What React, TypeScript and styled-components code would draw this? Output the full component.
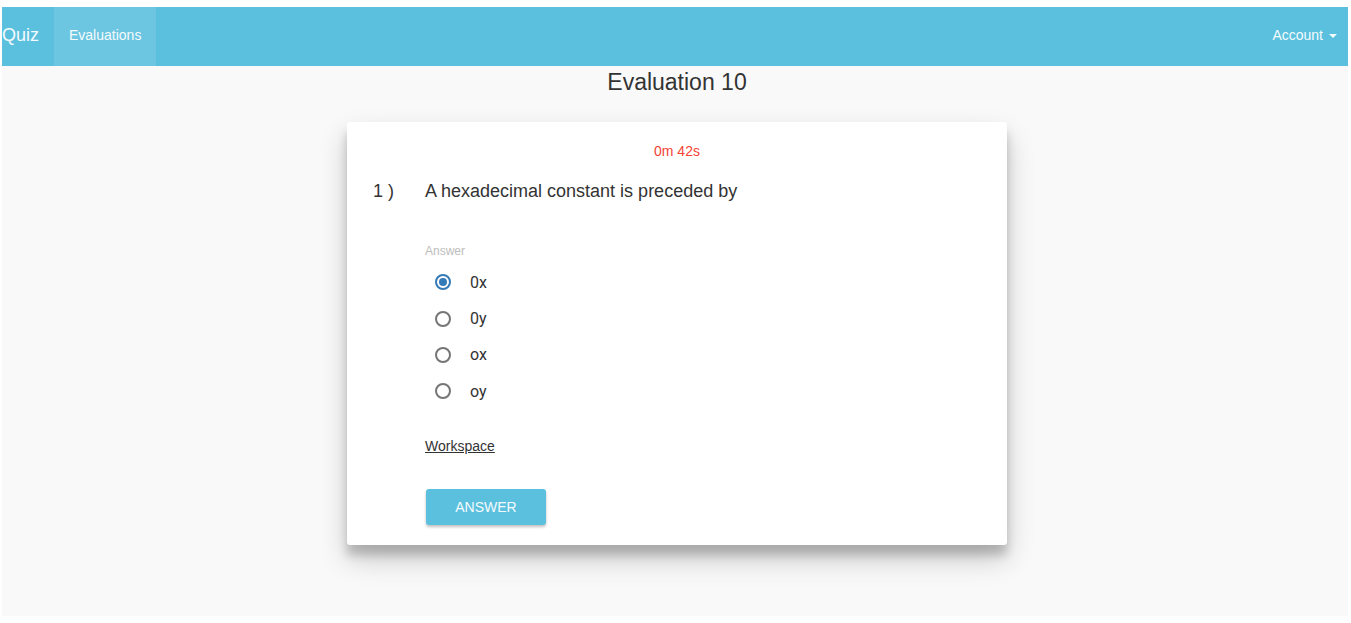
import React from "react";
import styled, { createGlobalStyle } from "styled-components";

const GlobalStyle = createGlobalStyle`
    body {
        margin: 0;
        background: #ffffff;
        font-family: "Liberation Sans", Arial, sans-serif;
        color: #333333;
    }
`;

const Frame = styled.div`
    margin: 7px 0 0 2px;
    width: 1346px;
    height: 609px;
    background: #f9f9f9;
    display: flex;
    flex-direction: column;
`;

const NavBar = styled.nav`
    height: 59px;
    background: #5bc0de;
    display: flex;
    align-items: stretch;
    color: #f4fbfd;
`;

const Brand = styled.div`
    display: flex;
    align-items: center;
    padding-bottom: 2px;
    font-size: 18px;
    width: 52px;
`;

const NavItem = styled.div<{ active?: boolean; right?: boolean }>`
    display: flex;
    align-items: center;
    padding: 0 ${(p) => (p.right ? "11px" : "15px")} 4px 15px;
    font-size: 14px;
    background: ${(p) => (p.active ? "#6cc6e1" : "transparent")};
`;

const Spacer = styled.div`
    flex: 1;
`;

const Caret = styled.span`
    display: inline-block;
    margin-left: 6px;
    margin-top: 2px;
    border-top: 4px solid #f4fbfd;
    border-left: 4px solid transparent;
    border-right: 4px solid transparent;
`;

const Main = styled.main`
    padding-left: 4px;
`;

const Title = styled.h1`
    margin: 3px 0 0;
    text-align: center;
    font-size: 23px;
    font-weight: normal;
    line-height: 26px;
    color: #333333;
`;

const Card = styled.div`
    width: 660px;
    margin: 27px auto 0;
    box-sizing: border-box;
    padding: 19px 26px 20px;
    background: #ffffff;
    border-radius: 3px;
    box-shadow: 0 14px 28px rgba(0, 0, 0, 0.2), 0 10px 10px rgba(0, 0, 0, 0.18);
`;

const Timer = styled.div`
    text-align: center;
    color: #f44336;
    font-size: 14px;
    line-height: 20px;
`;

const QuestionRow = styled.div`
    display: flex;
    margin-top: 18px;
    font-size: 18px;
    line-height: 24px;
`;

const Number = styled.div`
    width: 52px;
    color: #333333;
`;

const Body = styled.div`
    padding-left: 52px;
`;

const Label = styled.div`
    margin-top: 40px;
    font-size: 12px;
    line-height: 16px;
    color: #bdbdbd;
`;

const Options = styled.div`
    margin-top: 5px;
    padding-left: 10px;
`;

const Option = styled.label`
    display: flex;
    align-items: center;
    height: 36.4px;
    font-family: Roboto, "Liberation Sans", sans-serif;
    font-size: 16px;
    color: #333333;
`;

const Radio = styled.span<{ checked?: boolean }>`
    box-sizing: border-box;
    width: 16px;
    height: 16px;
    border-radius: 50%;
    border: 2px solid ${(p) => (p.checked ? "#337ab7" : "#757575")};
    margin-right: 19px;
    display: flex;
    align-items: center;
    justify-content: center;
    &::after {
        content: "";
        width: 8px;
        height: 8px;
        border-radius: 50%;
        background: ${(p) => (p.checked ? "#337ab7" : "transparent")};
    }
`;

const WorkspaceLink = styled.a`
    display: inline-block;
    margin-top: 26px;
    font-size: 14px;
    line-height: 20px;
    color: #333333;
    text-decoration: underline;
`;

const AnswerButton = styled.button`
    display: block;
    margin-top: 33px;
    margin-left: 1px;
    width: 120px;
    height: 36px;
    border: none;
    border-radius: 3px;
    background: #5bc0de;
    color: #f4fbfd;
    font-family: "Liberation Sans", Arial, sans-serif;
    font-size: 14px;
    box-shadow: 0 2px 3px rgba(0, 0, 0, 0.25);
    cursor: pointer;
`;

const options = ["0x", "0y", "ox", "oy"];

const App = () => {
    return (
        <>
            <GlobalStyle />
            <Frame>
                <NavBar>
                    <Brand>Quiz</Brand>
                    <NavItem active>Evaluations</NavItem>
                    <Spacer />
                    <NavItem right>
                        Account<Caret />
                    </NavItem>
                </NavBar>
                <Main>
                    <Title>Evaluation 10</Title>
                    <Card>
                        <Timer>0m 42s</Timer>
                        <QuestionRow>
                            <Number>1 )</Number>
                            <div>A hexadecimal constant is preceded by</div>
                        </QuestionRow>
                        <Body>
                            <Label>Answer</Label>
                            <Options>
                                {options.map((o, i) => (
                                    <Option key={o}>
                                        <Radio checked={i === 0} />
                                        {o}
                                    </Option>
                                ))}
                            </Options>
                            <WorkspaceLink>Workspace</WorkspaceLink>
                            <AnswerButton>ANSWER</AnswerButton>
                        </Body>
                    </Card>
                </Main>
            </Frame>
        </>
    );
};

export default App;
